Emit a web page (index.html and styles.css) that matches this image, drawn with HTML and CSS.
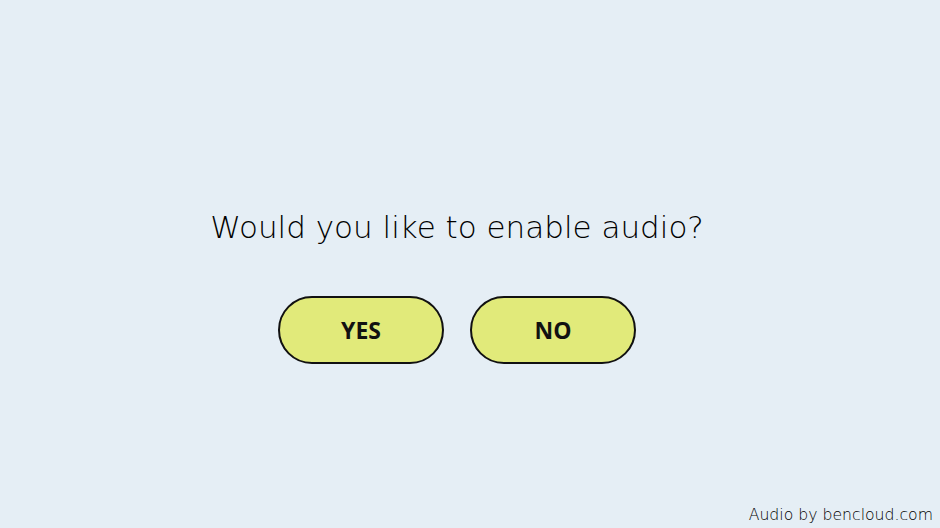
FILE: index.html
```html
<!DOCTYPE html>
<html lang="en">
<head>
<meta charset="utf-8">
<link rel="stylesheet" href="styles.css">
</head>
<body>
<main class="page">
  <section class="prompt">
    <h1 class="question">Would you like to enable audio?</h1>
    <div class="choices">
      <button class="choice">YES</button>
      <button class="choice">NO</button>
    </div>
  </section>
  <footer class="credit">Audio by bencloud.com</footer>
</main>
</body>
</html>
```

FILE: styles.css
```css
html, body {
  margin: 0;
  padding: 0;
  height: 100%;
}
body {
  background: #e5eef5;
  font-family: "DejaVu Sans", "Lato", sans-serif;
  color: #111;
}
.page {
  height: 100%;
  display: flex;
  flex-direction: column;
  box-sizing: border-box;
}
.prompt {
  flex: 1;
  display: flex;
  flex-direction: column;
  align-items: center;
  padding-top: 205px;
  padding-right: 26px;
}
.question {
  margin: 0;
  font-weight: 200;
  font-size: 31px;
  line-height: 44px;
  letter-spacing: 0;
  color: #000;
}
.choices {
  display: flex;
  gap: 26px;
  margin-top: 47px;
}
.choice {
  width: 166px;
  height: 68px;
  box-sizing: border-box;
  border: 2px solid #111;
  border-radius: 34px;
  background: #e1ea7a;
  font-family: "Open Sans", sans-serif;
  font-weight: 700;
  font-size: 23px;
  color: #111;
  padding: 0;
}
.credit {
  align-self: flex-end;
  padding: 0 7px 3px 0;
  font-weight: 200;
  font-size: 15.7px;
  line-height: 20px;
  letter-spacing: 0;
  color: #000;
}
```
